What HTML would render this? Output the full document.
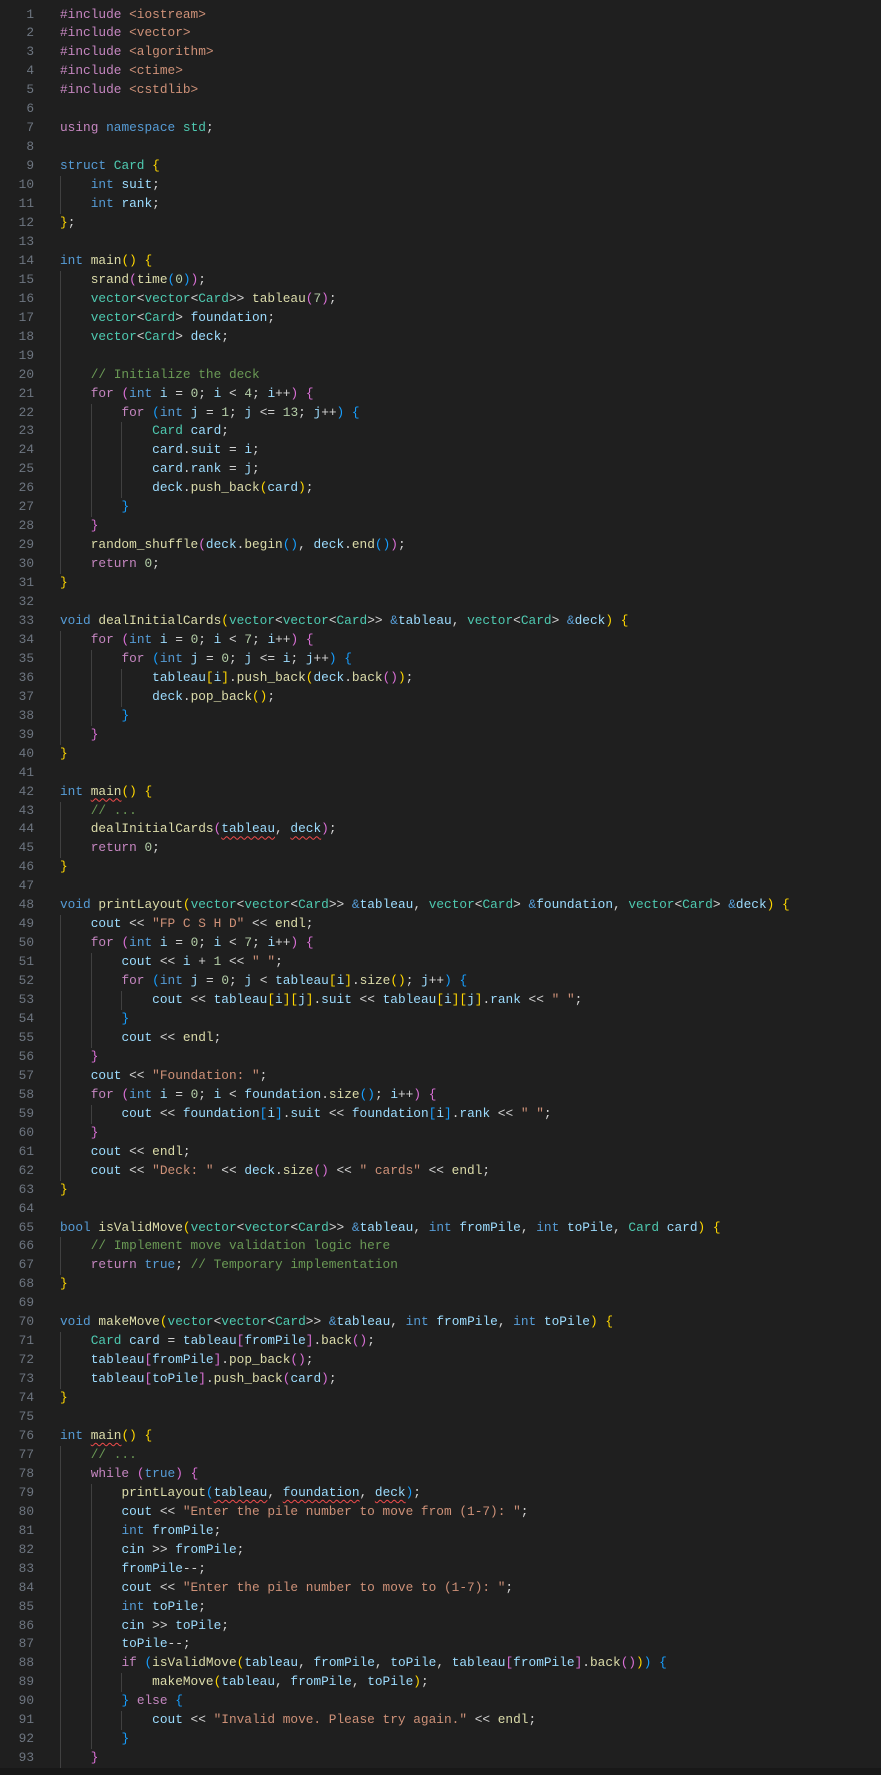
<!DOCTYPE html>
<html><head><meta charset="utf-8">
<style>
html,body{margin:0;padding:0;background:#1f1f1f;}
body{width:881px;height:1775px;overflow:hidden;position:relative;font-family:"Liberation Mono",monospace;font-size:12.8px;color:#d4d4d4;}
#code{position:absolute;top:5.5px;left:0;width:881px;}
.l{position:relative;height:18.96px;line-height:18.96px;white-space:pre;padding-left:60px;}
.l b{position:absolute;left:0;width:34px;text-align:right;font-weight:normal;color:#6e7681;}
i{display:inline-block;width:30.72px;height:18.96px;vertical-align:top;box-shadow:inset 1px 0 #404040;font-style:normal;}
.k{color:#c586c0}.s{color:#569cd6}.t{color:#4ec9b0}.f{color:#dcdcaa}.v{color:#9cdcfe}.q{color:#ce9178}.n{color:#b5cea8}.c{color:#6a9955}
.g{color:#ffd700}.o{color:#da70d6}.u{color:#179fff}
.e{text-decoration:underline wavy #f14c4c;text-underline-offset:3px;text-decoration-thickness:1px;}
#bar{position:absolute;left:0;right:0;top:1768px;height:7px;background:#181818;}
</style></head><body>
<div id="code">
<div class="l"><b>1</b><span class="k">#include</span> <span class="q">&lt;iostream&gt;</span></div>
<div class="l"><b>2</b><span class="k">#include</span> <span class="q">&lt;vector&gt;</span></div>
<div class="l"><b>3</b><span class="k">#include</span> <span class="q">&lt;algorithm&gt;</span></div>
<div class="l"><b>4</b><span class="k">#include</span> <span class="q">&lt;ctime&gt;</span></div>
<div class="l"><b>5</b><span class="k">#include</span> <span class="q">&lt;cstdlib&gt;</span></div>
<div class="l"><b>6</b></div>
<div class="l"><b>7</b><span class="k">using</span> <span class="s">namespace</span> <span class="t">std</span>;</div>
<div class="l"><b>8</b></div>
<div class="l"><b>9</b><span class="s">struct</span> <span class="t">Card</span> <span class="g">{</span></div>
<div class="l"><b>10</b><i></i><span class="s">int</span> <span class="v">suit</span>;</div>
<div class="l"><b>11</b><i></i><span class="s">int</span> <span class="v">rank</span>;</div>
<div class="l"><b>12</b><span class="g">}</span>;</div>
<div class="l"><b>13</b></div>
<div class="l"><b>14</b><span class="s">int</span> <span class="f">main</span><span class="g">()</span> <span class="g">{</span></div>
<div class="l"><b>15</b><i></i><span class="f">srand</span><span class="o">(</span><span class="f">time</span><span class="u">(</span><span class="n">0</span><span class="u">)</span><span class="o">)</span>;</div>
<div class="l"><b>16</b><i></i><span class="t">vector</span>&lt;<span class="t">vector</span>&lt;<span class="t">Card</span>&gt;&gt; <span class="f">tableau</span><span class="o">(</span><span class="n">7</span><span class="o">)</span>;</div>
<div class="l"><b>17</b><i></i><span class="t">vector</span>&lt;<span class="t">Card</span>&gt; <span class="v">foundation</span>;</div>
<div class="l"><b>18</b><i></i><span class="t">vector</span>&lt;<span class="t">Card</span>&gt; <span class="v">deck</span>;</div>
<div class="l"><b>19</b><i></i></div>
<div class="l"><b>20</b><i></i><span class="c">// Initialize the deck</span></div>
<div class="l"><b>21</b><i></i><span class="k">for</span> <span class="o">(</span><span class="s">int</span> <span class="v">i</span> = <span class="n">0</span>; <span class="v">i</span> &lt; <span class="n">4</span>; <span class="v">i</span>++<span class="o">)</span> <span class="o">{</span></div>
<div class="l"><b>22</b><i></i><i></i><span class="k">for</span> <span class="u">(</span><span class="s">int</span> <span class="v">j</span> = <span class="n">1</span>; <span class="v">j</span> &lt;= <span class="n">13</span>; <span class="v">j</span>++<span class="u">)</span> <span class="u">{</span></div>
<div class="l"><b>23</b><i></i><i></i><i></i><span class="t">Card</span> <span class="v">card</span>;</div>
<div class="l"><b>24</b><i></i><i></i><i></i><span class="v">card</span>.<span class="v">suit</span> = <span class="v">i</span>;</div>
<div class="l"><b>25</b><i></i><i></i><i></i><span class="v">card</span>.<span class="v">rank</span> = <span class="v">j</span>;</div>
<div class="l"><b>26</b><i></i><i></i><i></i><span class="v">deck</span>.<span class="f">push_back</span><span class="g">(</span><span class="v">card</span><span class="g">)</span>;</div>
<div class="l"><b>27</b><i></i><i></i><span class="u">}</span></div>
<div class="l"><b>28</b><i></i><span class="o">}</span></div>
<div class="l"><b>29</b><i></i><span class="f">random_shuffle</span><span class="o">(</span><span class="v">deck</span>.<span class="f">begin</span><span class="u">()</span>, <span class="v">deck</span>.<span class="f">end</span><span class="u">()</span><span class="o">)</span>;</div>
<div class="l"><b>30</b><i></i><span class="k">return</span> <span class="n">0</span>;</div>
<div class="l"><b>31</b><span class="g">}</span></div>
<div class="l"><b>32</b></div>
<div class="l"><b>33</b><span class="s">void</span> <span class="f">dealInitialCards</span><span class="g">(</span><span class="t">vector</span>&lt;<span class="t">vector</span>&lt;<span class="t">Card</span>&gt;&gt; <span class="s">&amp;</span><span class="v">tableau</span>, <span class="t">vector</span>&lt;<span class="t">Card</span>&gt; <span class="s">&amp;</span><span class="v">deck</span><span class="g">)</span> <span class="g">{</span></div>
<div class="l"><b>34</b><i></i><span class="k">for</span> <span class="o">(</span><span class="s">int</span> <span class="v">i</span> = <span class="n">0</span>; <span class="v">i</span> &lt; <span class="n">7</span>; <span class="v">i</span>++<span class="o">)</span> <span class="o">{</span></div>
<div class="l"><b>35</b><i></i><i></i><span class="k">for</span> <span class="u">(</span><span class="s">int</span> <span class="v">j</span> = <span class="n">0</span>; <span class="v">j</span> &lt;= <span class="v">i</span>; <span class="v">j</span>++<span class="u">)</span> <span class="u">{</span></div>
<div class="l"><b>36</b><i></i><i></i><i></i><span class="v">tableau</span><span class="g">[</span><span class="v">i</span><span class="g">]</span>.<span class="f">push_back</span><span class="g">(</span><span class="v">deck</span>.<span class="f">back</span><span class="o">()</span><span class="g">)</span>;</div>
<div class="l"><b>37</b><i></i><i></i><i></i><span class="v">deck</span>.<span class="f">pop_back</span><span class="g">()</span>;</div>
<div class="l"><b>38</b><i></i><i></i><span class="u">}</span></div>
<div class="l"><b>39</b><i></i><span class="o">}</span></div>
<div class="l"><b>40</b><span class="g">}</span></div>
<div class="l"><b>41</b></div>
<div class="l"><b>42</b><span class="s">int</span> <span class="f e">main</span><span class="g">()</span> <span class="g">{</span></div>
<div class="l"><b>43</b><i></i><span class="c">// ...</span></div>
<div class="l"><b>44</b><i></i><span class="f">dealInitialCards</span><span class="o">(</span><span class="v e">tableau</span>, <span class="v e">deck</span><span class="o">)</span>;</div>
<div class="l"><b>45</b><i></i><span class="k">return</span> <span class="n">0</span>;</div>
<div class="l"><b>46</b><span class="g">}</span></div>
<div class="l"><b>47</b></div>
<div class="l"><b>48</b><span class="s">void</span> <span class="f">printLayout</span><span class="g">(</span><span class="t">vector</span>&lt;<span class="t">vector</span>&lt;<span class="t">Card</span>&gt;&gt; <span class="s">&amp;</span><span class="v">tableau</span>, <span class="t">vector</span>&lt;<span class="t">Card</span>&gt; <span class="s">&amp;</span><span class="v">foundation</span>, <span class="t">vector</span>&lt;<span class="t">Card</span>&gt; <span class="s">&amp;</span><span class="v">deck</span><span class="g">)</span> <span class="g">{</span></div>
<div class="l"><b>49</b><i></i><span class="v">cout</span> &lt;&lt; <span class="q">"FP C S H D"</span> &lt;&lt; <span class="f">endl</span>;</div>
<div class="l"><b>50</b><i></i><span class="k">for</span> <span class="o">(</span><span class="s">int</span> <span class="v">i</span> = <span class="n">0</span>; <span class="v">i</span> &lt; <span class="n">7</span>; <span class="v">i</span>++<span class="o">)</span> <span class="o">{</span></div>
<div class="l"><b>51</b><i></i><i></i><span class="v">cout</span> &lt;&lt; <span class="v">i</span> + <span class="n">1</span> &lt;&lt; <span class="q">" "</span>;</div>
<div class="l"><b>52</b><i></i><i></i><span class="k">for</span> <span class="u">(</span><span class="s">int</span> <span class="v">j</span> = <span class="n">0</span>; <span class="v">j</span> &lt; <span class="v">tableau</span><span class="g">[</span><span class="v">i</span><span class="g">]</span>.<span class="f">size</span><span class="g">()</span>; <span class="v">j</span>++<span class="u">)</span> <span class="u">{</span></div>
<div class="l"><b>53</b><i></i><i></i><i></i><span class="v">cout</span> &lt;&lt; <span class="v">tableau</span><span class="g">[</span><span class="v">i</span><span class="g">][</span><span class="v">j</span><span class="g">]</span>.<span class="v">suit</span> &lt;&lt; <span class="v">tableau</span><span class="g">[</span><span class="v">i</span><span class="g">][</span><span class="v">j</span><span class="g">]</span>.<span class="v">rank</span> &lt;&lt; <span class="q">" "</span>;</div>
<div class="l"><b>54</b><i></i><i></i><span class="u">}</span></div>
<div class="l"><b>55</b><i></i><i></i><span class="v">cout</span> &lt;&lt; <span class="f">endl</span>;</div>
<div class="l"><b>56</b><i></i><span class="o">}</span></div>
<div class="l"><b>57</b><i></i><span class="v">cout</span> &lt;&lt; <span class="q">"Foundation: "</span>;</div>
<div class="l"><b>58</b><i></i><span class="k">for</span> <span class="o">(</span><span class="s">int</span> <span class="v">i</span> = <span class="n">0</span>; <span class="v">i</span> &lt; <span class="v">foundation</span>.<span class="f">size</span><span class="u">()</span>; <span class="v">i</span>++<span class="o">)</span> <span class="o">{</span></div>
<div class="l"><b>59</b><i></i><i></i><span class="v">cout</span> &lt;&lt; <span class="v">foundation</span><span class="u">[</span><span class="v">i</span><span class="u">]</span>.<span class="v">suit</span> &lt;&lt; <span class="v">foundation</span><span class="u">[</span><span class="v">i</span><span class="u">]</span>.<span class="v">rank</span> &lt;&lt; <span class="q">" "</span>;</div>
<div class="l"><b>60</b><i></i><span class="o">}</span></div>
<div class="l"><b>61</b><i></i><span class="v">cout</span> &lt;&lt; <span class="f">endl</span>;</div>
<div class="l"><b>62</b><i></i><span class="v">cout</span> &lt;&lt; <span class="q">"Deck: "</span> &lt;&lt; <span class="v">deck</span>.<span class="f">size</span><span class="o">()</span> &lt;&lt; <span class="q">" cards"</span> &lt;&lt; <span class="f">endl</span>;</div>
<div class="l"><b>63</b><span class="g">}</span></div>
<div class="l"><b>64</b></div>
<div class="l"><b>65</b><span class="s">bool</span> <span class="f">isValidMove</span><span class="g">(</span><span class="t">vector</span>&lt;<span class="t">vector</span>&lt;<span class="t">Card</span>&gt;&gt; <span class="s">&amp;</span><span class="v">tableau</span>, <span class="s">int</span> <span class="v">fromPile</span>, <span class="s">int</span> <span class="v">toPile</span>, <span class="t">Card</span> <span class="v">card</span><span class="g">)</span> <span class="g">{</span></div>
<div class="l"><b>66</b><i></i><span class="c">// Implement move validation logic here</span></div>
<div class="l"><b>67</b><i></i><span class="k">return</span> <span class="s">true</span>; <span class="c">// Temporary implementation</span></div>
<div class="l"><b>68</b><span class="g">}</span></div>
<div class="l"><b>69</b></div>
<div class="l"><b>70</b><span class="s">void</span> <span class="f">makeMove</span><span class="g">(</span><span class="t">vector</span>&lt;<span class="t">vector</span>&lt;<span class="t">Card</span>&gt;&gt; <span class="s">&amp;</span><span class="v">tableau</span>, <span class="s">int</span> <span class="v">fromPile</span>, <span class="s">int</span> <span class="v">toPile</span><span class="g">)</span> <span class="g">{</span></div>
<div class="l"><b>71</b><i></i><span class="t">Card</span> <span class="v">card</span> = <span class="v">tableau</span><span class="o">[</span><span class="v">fromPile</span><span class="o">]</span>.<span class="f">back</span><span class="o">()</span>;</div>
<div class="l"><b>72</b><i></i><span class="v">tableau</span><span class="o">[</span><span class="v">fromPile</span><span class="o">]</span>.<span class="f">pop_back</span><span class="o">()</span>;</div>
<div class="l"><b>73</b><i></i><span class="v">tableau</span><span class="o">[</span><span class="v">toPile</span><span class="o">]</span>.<span class="f">push_back</span><span class="o">(</span><span class="v">card</span><span class="o">)</span>;</div>
<div class="l"><b>74</b><span class="g">}</span></div>
<div class="l"><b>75</b></div>
<div class="l"><b>76</b><span class="s">int</span> <span class="f e">main</span><span class="g">()</span> <span class="g">{</span></div>
<div class="l"><b>77</b><i></i><span class="c">// ...</span></div>
<div class="l"><b>78</b><i></i><span class="k">while</span> <span class="o">(</span><span class="s">true</span><span class="o">)</span> <span class="o">{</span></div>
<div class="l"><b>79</b><i></i><i></i><span class="f">printLayout</span><span class="u">(</span><span class="v e">tableau</span>, <span class="v e">foundation</span>, <span class="v e">deck</span><span class="u">)</span>;</div>
<div class="l"><b>80</b><i></i><i></i><span class="v">cout</span> &lt;&lt; <span class="q">"Enter the pile number to move from (1-7): "</span>;</div>
<div class="l"><b>81</b><i></i><i></i><span class="s">int</span> <span class="v">fromPile</span>;</div>
<div class="l"><b>82</b><i></i><i></i><span class="v">cin</span> &gt;&gt; <span class="v">fromPile</span>;</div>
<div class="l"><b>83</b><i></i><i></i><span class="v">fromPile</span>--;</div>
<div class="l"><b>84</b><i></i><i></i><span class="v">cout</span> &lt;&lt; <span class="q">"Enter the pile number to move to (1-7): "</span>;</div>
<div class="l"><b>85</b><i></i><i></i><span class="s">int</span> <span class="v">toPile</span>;</div>
<div class="l"><b>86</b><i></i><i></i><span class="v">cin</span> &gt;&gt; <span class="v">toPile</span>;</div>
<div class="l"><b>87</b><i></i><i></i><span class="v">toPile</span>--;</div>
<div class="l"><b>88</b><i></i><i></i><span class="k">if</span> <span class="u">(</span><span class="f">isValidMove</span><span class="g">(</span><span class="v">tableau</span>, <span class="v">fromPile</span>, <span class="v">toPile</span>, <span class="v">tableau</span><span class="o">[</span><span class="v">fromPile</span><span class="o">]</span>.<span class="f">back</span><span class="o">()</span><span class="g">)</span><span class="u">)</span> <span class="u">{</span></div>
<div class="l"><b>89</b><i></i><i></i><i></i><span class="f">makeMove</span><span class="g">(</span><span class="v">tableau</span>, <span class="v">fromPile</span>, <span class="v">toPile</span><span class="g">)</span>;</div>
<div class="l"><b>90</b><i></i><i></i><span class="u">}</span> <span class="k">else</span> <span class="u">{</span></div>
<div class="l"><b>91</b><i></i><i></i><i></i><span class="v">cout</span> &lt;&lt; <span class="q">"Invalid move. Please try again."</span> &lt;&lt; <span class="f">endl</span>;</div>
<div class="l"><b>92</b><i></i><i></i><span class="u">}</span></div>
<div class="l"><b>93</b><i></i><span class="o">}</span></div>
</div>
<div id="bar"></div>
</body></html>
